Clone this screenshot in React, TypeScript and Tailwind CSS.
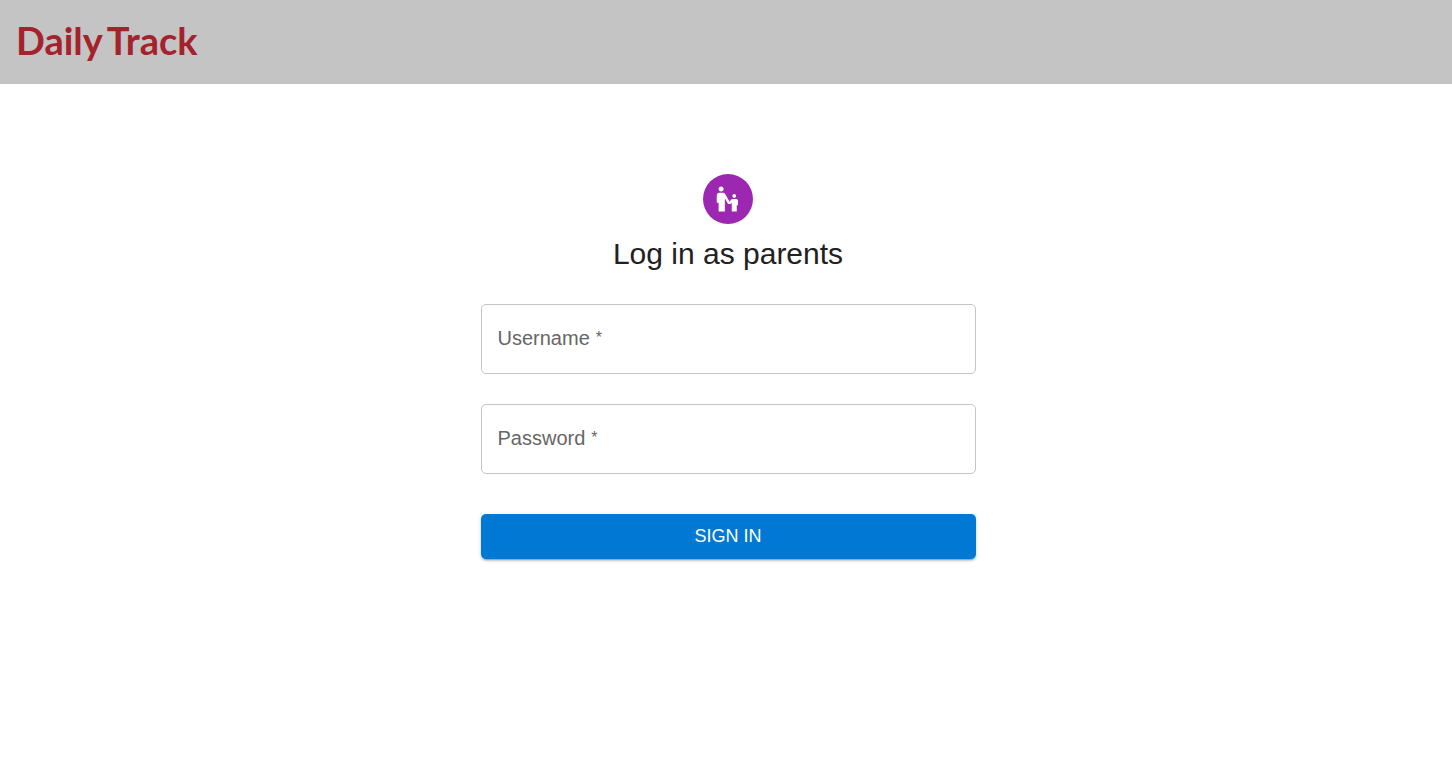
import { useState } from "react";
import { MdEscalatorWarning } from "react-icons/md";

type FieldProps = {
  id: string;
  label: string;
  type: string;
  autoComplete: string;
};

function Field({ id, label, type, autoComplete }: FieldProps) {
  const [value, setValue] = useState("");
  return (
    <div className="relative">
      <input
        id={id}
        name={id}
        type={type}
        required
        autoComplete={autoComplete}
        value={value}
        onChange={(e) => setValue(e.target.value)}
        className="peer block h-[70px] w-full rounded-[5px] border border-[#c4c4c4] bg-white px-4 text-xl text-[#212121] outline-none focus:border-[#0078d4]"
      />
      <label
        htmlFor={id}
        className={
          value
            ? "pointer-events-none absolute -top-3 left-3 flex items-center gap-1 bg-white px-1 text-base text-[#666666]"
            : "pointer-events-none absolute inset-y-0 left-[17px] flex items-center gap-1.5 pb-0.5 text-xl text-[#666666] peer-focus:text-[#0078d4]"
        }
      >
        {label}
        <span className="text-base" aria-hidden="true">
          *
        </span>
      </label>
    </div>
  );
}

export default function App() {
  return (
    <div className="min-h-screen bg-white font-['Liberation_Sans',Arial,sans-serif] text-[#212121]">
      <header className="flex h-[84px] items-center bg-[#c4c4c4] px-4 pb-1">
        <a
          href="#"
          className="flex gap-1 font-[Lato,sans-serif] text-[38px] font-bold text-[#a4222c]"
        >
          <span>Daily</span>
          <span>Track</span>
        </a>
      </header>

      <main className="pt-[90px] pl-1">
        <div className="mx-auto flex w-full max-w-[555px] flex-col items-center px-[30px]">
          <div className="flex size-[50px] items-center justify-center rounded-full bg-[#9c27b0] text-white">
            <MdEscalatorWarning className="size-[30px]" aria-hidden="true" />
          </div>
          <h1 className="mt-2.5 text-3xl leading-10">Log in as parents</h1>
          <form
            className="mt-[30px] flex w-full flex-col gap-[30px]"
            onSubmit={(e) => e.preventDefault()}
          >
            <Field id="username" label="Username" type="text" autoComplete="username" />
            <Field
              id="password"
              label="Password"
              type="password"
              autoComplete="current-password"
            />
            <button
              type="submit"
              className="mt-2.5 h-[45px] w-full cursor-pointer rounded-[5px] bg-[#0078d4] pb-0.5 text-lg font-medium text-white uppercase shadow-[0_3px_1px_-2px_rgba(0,0,0,0.2),0_2px_2px_0_rgba(0,0,0,0.14),0_1px_5px_0_rgba(0,0,0,0.12)] hover:bg-[#0063b0]"
            >
              Sign in
            </button>
          </form>
        </div>
      </main>
    </div>
  );
}
